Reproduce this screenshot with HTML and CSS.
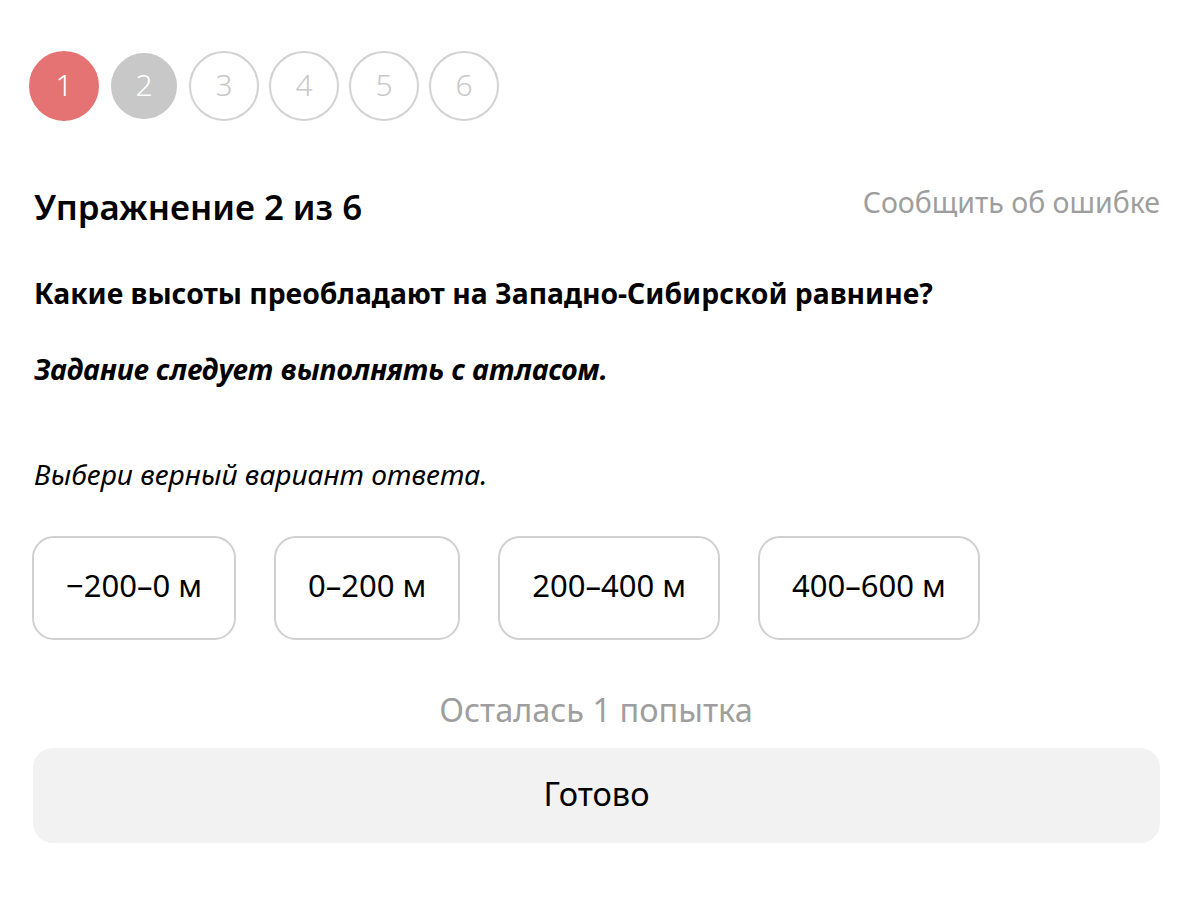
FILE: index.html
```html
<!DOCTYPE html>
<html lang="ru">

<head>
    <meta charset="UTF-8">
    <meta name="viewport" content="width=device-width, initial-scale=1.0">
    <title>Упражнение 2 из 6</title>
    <link rel="stylesheet" href="styles.css">
</head>

<body>
    <div class="exercise">
        <div class="steps">
            <span class="step step-failed">1</span>
            <span class="step step-current">2</span>
            <span class="step">3</span>
            <span class="step">4</span>
            <span class="step">5</span>
            <span class="step">6</span>
        </div>

        <div class="exercise-header">
            <h2 class="exercise-title">Упражнение 2 из 6</h2>
            <a class="report-link" href="#">Сообщить об ошибке</a>
        </div>

        <p class="question">Какие высоты преобладают на Западно-Сибирской равнине?</p>
        <p class="question-note">Задание следует выполнять с атласом.</p>

        <p class="instruction">Выбери верный вариант ответа.</p>

        <div class="options">
            <button class="option">−200–0 м</button>
            <button class="option">0–200 м</button>
            <button class="option">200–400 м</button>
            <button class="option">400–600 м</button>
        </div>

        <div class="attempts">Осталась 1 попытка</div>
        <button class="submit-button">Готово</button>
    </div>
</body>

</html>
```

FILE: styles.css
```css
body {
    font-family: 'Noto Sans', 'Open Sans', sans-serif;
    margin: 0;
    padding: 0;
    background: #fff;
    color: #000;
}

.exercise {
    display: flex;
    flex-direction: column;
    padding: 51px 40px 40px 32px;
}

.steps {
    display: flex;
    align-items: center;
    gap: 10px;
    margin-left: -3px;
}

.step {
    width: 66px;
    height: 63px;
    padding-bottom: 3px;
    border: 2px solid #d2d2d2;
    border-radius: 50%;
    display: flex;
    align-items: center;
    justify-content: center;
    font-size: 30px;
    font-weight: 300;
    color: #c8c8c8;
}

.step-failed {
    background: #e57373;
    border-color: #e57373;
    color: #fff;
}

.step-current {
    background: #c8c8c8;
    border-color: #fff;
    color: #fff;
}

.exercise-header {
    display: flex;
    justify-content: space-between;
    align-items: flex-start;
    margin-top: 61px;
}

.exercise-title {
    margin: 3px 0 0 2px;
    font-size: 34.8px;
    font-weight: 600;
    line-height: 44px;
}

.report-link {
    font-size: 28.5px;
    line-height: 40px;
    color: #9e9e9e;
    text-decoration: none;
}

.question {
    margin: 46px 0 0 2px;
    font-size: 28.3px;
    font-weight: 700;
    line-height: 36px;
}

.question-note {
    margin: 40px 0 0 2px;
    font-size: 28.6px;
    font-weight: 700;
    font-style: italic;
    line-height: 36px;
}

.instruction {
    margin: 67px 0 0 2px;
    font-size: 28.2px;
    font-style: italic;
    line-height: 40px;
}

.options {
    display: flex;
    gap: 38px;
    margin-top: 42px;
}

.option {
    height: 104px;
    padding: 0 32px 7px;
    border: 2px solid #d0d0d0;
    border-radius: 22px;
    background: #fff;
    font-family: inherit;
    font-size: 31px;
    color: #000;
    cursor: pointer;
}

.attempts {
    margin-top: 50px;
    text-align: center;
    font-size: 32.5px;
    line-height: 40px;
    color: #9e9e9e;
}

.submit-button {
    margin: 18px 0 0 1px;
    height: 95px;
    padding-bottom: 6px;
    border: none;
    border-radius: 20px;
    background: #f2f2f2;
    font-family: inherit;
    font-size: 32.5px;
    color: #000;
    cursor: pointer;
}
```
